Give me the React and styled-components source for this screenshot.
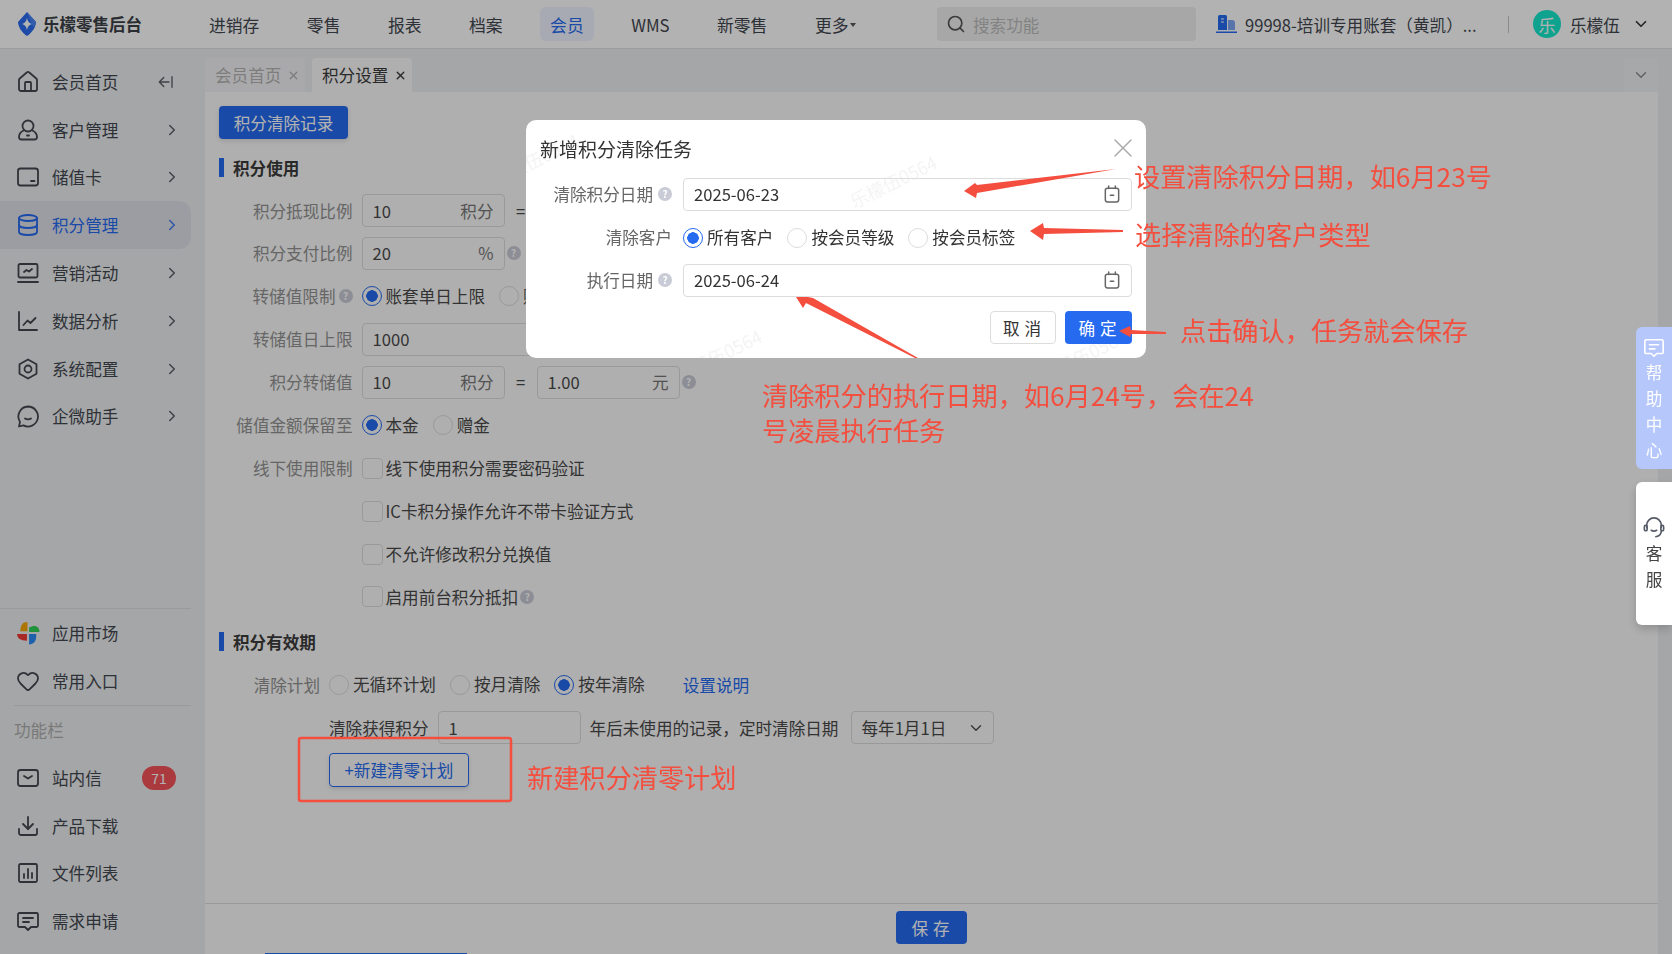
import React from 'react'
import styled, { createGlobalStyle } from 'styled-components'
import { House, Database, ChevronRight, ChevronDown, Heart, Download, X, Search } from 'lucide-react'

const blue = '#266af0'
const red = '#f44e3f'
const ink = '#42474f'

const sideTop = [
  { name: '会员首页', icon: House, collapse: true },
  { name: '客户管理', icon: UserIcon, arrow: true },
  { name: '储值卡', icon: CardIcon, arrow: true },
  { name: '积分管理', icon: Database, arrow: true, active: true },
  { name: '营销活动', icon: ScreenIcon, arrow: true },
  { name: '数据分析', icon: ChartIcon, arrow: true },
  { name: '系统配置', icon: HexIcon, arrow: true },
  { name: '企微助手', icon: ChatIcon, arrow: true },
]

const sideTools = [
  { name: '站内信', icon: MailIcon, badge: 71 },
  { name: '产品下载', icon: Download },
  { name: '文件列表', icon: FilesIcon },
  { name: '需求申请', icon: RequestIcon },
]

const headerNav = ['进销存', '零售', '报表', '档案', '会员', 'WMS', '新零售']

function Line({ size = 24, children }) {
  return (
    <svg width={size} height={size} viewBox="0 0 24 24" fill="none" stroke="currentColor" strokeWidth="1.800" strokeLinecap="round" strokeLinejoin="round">
      {children}
    </svg>
  )
}

function UserIcon({ size }) {
  return (
    <Line size={size}>
      <circle cx="12" cy="8" r="5.500" />
      <path d="M7.500 12.500C4.500 14 3 16.500 3 19c0 1.500 1 2.500 2.500 2.500h13c1.500 0 2.500-1 2.500-2.500 0-2.500-1.500-5-4.500-6.500" />
      <path d="M11 17.500h2" />
    </Line>
  )
}

function CardIcon({ size }) {
  return (
    <Line size={size}>
      <rect x="2" y="3.500" width="20" height="17" rx="2.500" />
      <path d="M15 16h3.500" />
    </Line>
  )
}

function ScreenIcon({ size }) {
  return (
    <Line size={size}>
      <rect x="2.500" y="3" width="19" height="13.500" rx="1.500" />
      <path d="M8 11l2.500-2 2.500 1.500 3-2.500" />
      <path d="M2 21h20" />
    </Line>
  )
}

function ChartIcon({ size }) {
  return (
    <Line size={size}>
      <path d="M3 3v18h18" />
      <path d="M7.500 16l4-4.500 3 2.500 5-5" />
    </Line>
  )
}

function HexIcon({ size }) {
  return (
    <Line size={size}>
      <path d="M12 2.500l8.500 4.800v9.400L12 21.500l-8.500-4.800V7.300z" />
      <circle cx="12" cy="12" r="3.500" />
    </Line>
  )
}

function ChatIcon({ size }) {
  return (
    <Line size={size}>
      <path d="M12 2.500a10 10 0 1 1-4.600 18.900L3 22.500l1-4.600A10 10 0 0 1 12 2.500z" />
      <path d="M9 14.500c1.500 1 4.500 1 6 0" />
    </Line>
  )
}

function MailIcon({ size }) {
  return (
    <Line size={size}>
      <rect x="2" y="4" width="20" height="16" rx="2.500" />
      <path d="M8 10l4 2.500 4-2.500" />
    </Line>
  )
}

function FilesIcon({ size }) {
  return (
    <Line size={size}>
      <rect x="3" y="3" width="18" height="18" rx="1.500" />
      <path d="M8 17v-4M12 17V8M16 17v-5" />
    </Line>
  )
}

function RequestIcon({ size }) {
  return (
    <Line size={size}>
      <path d="M3.500 4h17A1.500 1.500 0 0 1 22 5.500v11a1.500 1.500 0 0 1-1.500 1.500H15l-3 3-3-3H3.500A1.500 1.500 0 0 1 2 16.500v-11A1.500 1.500 0 0 1 3.500 4z" />
      <path d="M7 9h10M7 13h6" />
    </Line>
  )
}

function CollapseIcon() {
  return (
    <Line size={18}>
      <path d="M9 6l-6 6 6 6M3 12h13M20 5v14" />
    </Line>
  )
}

function CalendarIcon() {
  return (
    <Line size={20}>
      <rect x="4" y="5" width="16" height="16.500" rx="2.500" />
      <path d="M8 2.500v3M16 2.500v3M10 13.500h4" />
    </Line>
  )
}

function PinwheelIcon() {
  return (
    <svg width="24" height="24" viewBox="0 0 22 22">
      <path d="M10.500 1C6 1 4 4 4 9.500h6.500z" fill="#f5a800" />
      <path d="M12 1v9h9.500C21.500 5.500 18 2.500 12 6z" fill="#2ed156" />
      <path d="M1 12c0 4 3 6 9 6v-6z" fill="#f03a36" />
      <path d="M12 12v9.500c5 0 7-4 6.500-9.500z" fill="#2a8cf5" />
    </svg>
  )
}

function LogoMark() {
  return (
    <svg width="18" height="24" viewBox="0 0 18 24">
      <path d="M9 0l9 10c-.5 6-4 10.500-9 14-5-3.500-8.500-8-9-14z" fill="#2a6cf0" />
      <path d="M9 0l9 10c-.5 3-1.500 4-3 5l-1-3z" fill="#4b86f7" />
      <path d="M9 6c.6 3.400 2.200 5.300 5 6-2.800.7-4.400 2.600-5 6-.6-3.400-2.200-5.300-5-6 2.800-.7 4.400-2.600 5-6z" fill="#ffffff" />
    </svg>
  )
}

function AccountIcon() {
  return (
    <svg width="21" height="20" viewBox="0 0 21 20">
      <path d="M2 2.500A1.500 1.500 0 0 1 3.500 1h6A1.500 1.500 0 0 1 11 2.500V16H2z" fill={blue} />
      <path d="M5 5h3M5 8h3" stroke="#ffffff" strokeWidth="1.200" />
      <path d="M12 6h4a3 3 0 0 1 3 3v7h-7z" fill="#7ea6f5" />
      <path d="M0 17.500h21V19H0z" fill={blue} />
    </svg>
  )
}

function Radio({ checked, children }) {
  return (
    <Choice>
      <RadioDot $checked={checked} />
      <span>{children}</span>
    </Choice>
  )
}

function UnitField({ value, unit, width }) {
  return (
    <Field $width={width}>
      <span>{value}</span>
      <FieldUnit>{unit}</FieldUnit>
    </Field>
  )
}

function Sidebar() {
  return (
    <Side>
      <SideGroup>
        {sideTop.map(item => (
          <SideItem key={item.name} $active={item.active}>
            <item.icon size={24} strokeWidth={1.8} />
            <span>{item.name}</span>
            {item.arrow && <SideEnd><ChevronRight size={18} strokeWidth={2} /></SideEnd>}
            {item.collapse && <SideEnd $pad={16}><CollapseIcon /></SideEnd>}
          </SideItem>
        ))}
      </SideGroup>
      <SideBottom>
        <SideItem><PinwheelIcon /><span>应用市场</span></SideItem>
        <SideItem><Heart size={24} strokeWidth={1.8} /><span>常用入口</span></SideItem>
        <SideRule />
        <SideCaption>功能栏</SideCaption>
        {sideTools.map(item => (
          <SideItem key={item.name}>
            <item.icon size={24} strokeWidth={1.8} />
            <span>{item.name}</span>
            {item.badge && <Badge>{item.badge}</Badge>}
          </SideItem>
        ))}
      </SideBottom>
    </Side>
  )
}

function TopBar() {
  return (
    <Header>
      <Brand>
        <LogoMark />
        <span>乐檬零售后台</span>
      </Brand>
      <HeaderNav>
        {headerNav.map(name => (
          <HeaderLink key={name} $active={name === '会员'}>{name}</HeaderLink>
        ))}
        <HeaderLink>更多<Caret /></HeaderLink>
      </HeaderNav>
      <SearchBox>
        <Search size={20} strokeWidth={2} color="#555" />
        <span>搜索功能</span>
      </SearchBox>
      <Account>
        <AccountIcon />
        <span>99998-培训专用账套（黄凯）</span>
        <AccountMore>...</AccountMore>
      </Account>
      <HeaderRule />
      <Avatar>乐</Avatar>
      <UserName>乐檬伍</UserName>
      <ChevronDown size={18} strokeWidth={2.200} color="#333" />
    </Header>
  )
}

function SettingsForm() {
  return (
    <Content>
      <Scroll>
        <PrimaryButton>积分清除记录</PrimaryButton>
        <SectionTitle $top={19} $bottom={17}>积分使用</SectionTitle>
        <Rows>
          <Row>
            <Label>积分抵现比例</Label>
            <UnitField value="10" unit="积分" />
            <Equal>=</Equal>
            <UnitField value="1.00" unit="元" />
          </Row>
          <Row>
            <Label>积分支付比例</Label>
            <UnitField value="20" unit="%" />
            <FieldHint>?</FieldHint>
          </Row>
          <Row>
            <Label>转储值限制<HintMark>?</HintMark></Label>
            <ChoiceGroup>
              <Radio checked>账套单日上限</Radio>
              <Radio>账套单笔上限</Radio>
            </ChoiceGroup>
          </Row>
          <Row>
            <Label>转储值日上限</Label>
            <UnitField value="1000" width={317} />
          </Row>
          <Row>
            <Label>积分转储值</Label>
            <UnitField value="10" unit="积分" />
            <Equal>=</Equal>
            <UnitField value="1.00" unit="元" />
            <FieldHint>?</FieldHint>
          </Row>
          <Row>
            <Label>储值金额保留至</Label>
            <ChoiceGroup>
              <Radio checked>本金</Radio>
              <Radio>赠金</Radio>
            </ChoiceGroup>
          </Row>
          <Row>
            <Label>线下使用限制</Label>
            <CheckItem>线下使用积分需要密码验证</CheckItem>
          </Row>
          <Row>
            <Label />
            <CheckItem>IC卡积分操作允许不带卡验证方式</CheckItem>
          </Row>
          <Row>
            <Label />
            <CheckItem>不允许修改积分兑换值</CheckItem>
          </Row>
          <Row>
            <Label />
            <CheckItem>启用前台积分抵扣<CheckHint>?</CheckHint></CheckItem>
          </Row>
        </Rows>
        <SectionTitle $top={19} $bottom={17}>积分有效期</SectionTitle>
        <Rows>
          <Row>
            <Label $width={101}>清除计划</Label>
            <ChoiceGroup>
              <Radio>无循环计划</Radio>
              <Radio>按月清除</Radio>
              <Radio checked>按年清除</Radio>
            </ChoiceGroup>
            <DocLink>设置说明</DocLink>
          </Row>
          <PlanRow>
            <span>清除获得积分</span>
            <UnitField value="1" />
            <span>年后未使用的记录，定时清除日期</span>
            <SelectBox>
              <span>每年1月1日</span>
              <ChevronDown size={18} strokeWidth={1.800} />
            </SelectBox>
          </PlanRow>
          <PlanRow>
            <OutlineButton>+新建清零计划</OutlineButton>
          </PlanRow>
        </Rows>
      </Scroll>
      <Footer>
        <SaveButton>保存</SaveButton>
      </Footer>
    </Content>
  )
}

function ClearTaskDialog() {
  return (
    <Mask>
      <Dialog>
        <Watermark $x={-38} $y={26}>乐檬伍0564</Watermark>
        <Watermark $x={320} $y={48}>乐檬伍0564</Watermark>
        <Watermark $x={145} $y={222}>乐檬伍0564</Watermark>
        <Watermark $x={510} $y={222}>乐檬伍0564</Watermark>
        <DialogHead>
          <span>新增积分清除任务</span>
          <CloseMark><X size={32} strokeWidth={1.100} /></CloseMark>
        </DialogHead>
        <DialogRows>
          <DialogRow>
            <DialogLabel>清除积分日期<HintMark>?</HintMark></DialogLabel>
            <DateField>
              <span>2025-06-23</span>
              <CalendarIcon />
            </DateField>
          </DialogRow>
          <DialogRow>
            <DialogLabel>清除客户</DialogLabel>
            <ChoiceGroup>
              <Radio checked>所有客户</Radio>
              <Radio>按会员等级</Radio>
              <Radio>按会员标签</Radio>
            </ChoiceGroup>
          </DialogRow>
          <DialogRow>
            <DialogLabel>执行日期<HintMark>?</HintMark></DialogLabel>
            <DateField>
              <span>2025-06-24</span>
              <CalendarIcon />
            </DateField>
          </DialogRow>
        </DialogRows>
        <DialogFoot>
          <GhostButton>取消</GhostButton>
          <ConfirmButton>确定</ConfirmButton>
        </DialogFoot>
      </Dialog>
    </Mask>
  )
}

function Annotations() {
  return (
    <>
      <MarkLayer viewBox="0 0 1672 954" width="1672" height="954">
        <polygon points="1116,169 977,185 975,183 964,191 976,198 977,193" fill={red} />
        <polygon points="1123,230 1044,228 1043,223 1030,231 1043,240 1044,234 1123,232" fill={red} />
        <polygon points="1166,332 1131,330 1130,326 1119,331 1130,337 1131,334 1166,334" fill={red} />
        <polygon points="918,358 813,298 808,297 796,297 803,308 806,303 915,358" fill={red} />
        <rect x="299" y="738" width="212" height="63" rx="2" fill="none" stroke={red} strokeWidth="2.500" />
      </MarkLayer>
      <Note $x={1134} $y={177}>设置清除积分日期，如6月23号</Note>
      <Note $x={1135} $y={235}>选择清除的客户类型</Note>
      <Note $x={1180} $y={331}>点击确认，任务就会保存</Note>
      <Note $x={762} $y={396}>清除积分的执行日期，如6月24号，会在24</Note>
      <Note $x={762} $y={431}>号凌晨执行任务</Note>
      <Note $x={527} $y={778}>新建积分清零计划</Note>
    </>
  )
}

function SidePanels() {
  return (
    <Panels>
      <HelpPanel>
        <svg width="22" height="22" viewBox="0 0 24 24" fill="none" stroke="currentColor" strokeWidth="1.800" strokeLinejoin="round" strokeLinecap="round">
          <path d="M3.500 3h17A1.500 1.500 0 0 1 22 4.500v12a1.500 1.500 0 0 1-1.500 1.500H15l-3 3-3-3H3.500A1.500 1.500 0 0 1 2 16.500v-12A1.500 1.500 0 0 1 3.500 3z" />
          <path d="M7 8.500h10M7 13h6" />
        </svg>
        <span>帮</span><span>助</span><span>中</span><span>心</span>
      </HelpPanel>
      <ServicePanel>
        <svg width="22" height="24" viewBox="0 0 24 26" fill="none" stroke="#555a66" strokeWidth="1.800" strokeLinecap="round">
          <path d="M4 12V10a8 8 0 0 1 16 0v2" />
          <rect x="1.500" y="10" width="3" height="6" rx="1.500" />
          <rect x="19.500" y="10" width="3" height="6" rx="1.500" />
          <path d="M9 15.500c1.500 1 4 1 6 0M20 16c0 4-3 6-6 6.500" />
        </svg>
        <span>客</span><span>服</span>
      </ServicePanel>
    </Panels>
  )
}

export default function App() {
  return (
    <>
      <GlobalStyle />
      <Page>
        <TopBar />
        <Body>
          <Sidebar />
          <Main>
            <TabBar>
              <Tab>会员首页<X size={13} strokeWidth={2.500} /></Tab>
              <Tab $active>积分设置<X size={13} strokeWidth={2.500} /></Tab>
              <TabMore><ChevronDown size={18} strokeWidth={1.800} /></TabMore>
            </TabBar>
            <SettingsForm />
          </Main>
        </Body>
        <ScrollTrace />
      </Page>
      <ClearTaskDialog />
      <SidePanels />
      <Annotations />
    </>
  )
}

//styled-components
const GlobalStyle = createGlobalStyle`
  html, body {
    margin: 0;
    height: 100%;
    overflow: hidden;
  }
  body {
    font-family: "Noto Sans CJK SC", "Liberation Sans", sans-serif;
    font-size: 16.6px;
    color: #494949;
  }
  * {
    box-sizing: border-box;
  }
`

const Page = styled.div`
  position: relative;
  width: 1672px;
  height: 954px;
  display: flex;
  flex-direction: column;
  background: #eceef0;
`

const Header = styled.header`
  height: 49px;
  flex: none;
  display: flex;
  align-items: center;
  padding-left: 18px;
  background: #ffffff;
  border-bottom: 1px solid #dfe0e2;
  color: #42474f;
`

const Brand = styled.div`
  display: flex;
  align-items: center;
  gap: 7px;
  width: 124px;
  font-size: 16.500px;
  font-weight: 700;
  white-space: nowrap;
  color: #3b3f46;
`

const HeaderNav = styled.nav`
  display: flex;
  align-items: center;
  gap: 27.500px;
  margin-left: 57px;
  font-size: 16.800px;
`

const HeaderLink = styled.div`
  display: flex;
  align-items: center;
  height: 34px;
  padding: 2px 10px 0;
  border-radius: 6px;
  white-space: nowrap;
  background: ${p => (p.$active ? '#f0f4ff' : 'transparent')};
  color: ${p => (p.$active ? blue : 'inherit')};
`

const Caret = styled.i`
  width: 0;
  height: 0;
  margin-left: 2px;
  border-left: 3.500px solid transparent;
  border-right: 3.500px solid transparent;
  border-top: 4.500px solid #555;
`

const SearchBox = styled.div`
  width: 259px;
  height: 34px;
  margin-left: 70.500px;
  padding-left: 9px;
  display: flex;
  align-items: center;
  gap: 7px;
  border-radius: 4px;
  background: #f0f0f0;
  color: #bcbcbc;
  span {
    padding-top: 2px;
  }
`

const Account = styled.div`
  width: 272px;
  margin-left: 20px;
  display: flex;
  align-items: center;
  gap: 8px;
  white-space: nowrap;
  span {
    padding-top: 2px;
  }
`

const AccountMore = styled.span`
  margin-left: -8px;
`

const HeaderRule = styled.div`
  width: 1px;
  height: 17px;
  margin-left: 20px;
  background: #c8c8c8;
`

const Avatar = styled.div`
  width: 28px;
  height: 28px;
  margin-left: 24px;
  border-radius: 50%;
  display: flex;
  align-items: center;
  justify-content: center;
  background: #16e8cc;
  color: #ffffff;
  font-size: 17px;
`

const UserName = styled.span`
  margin: 0 12px 0 9px;
  padding-top: 2px;
`

const Body = styled.div`
  flex: 1;
  min-height: 0;
  display: flex;
`

const Side = styled.aside`
  width: 205px;
  flex: none;
  display: flex;
  flex-direction: column;
  justify-content: space-between;
  padding: 9px 14px 9px 0;
  color: ${ink};
`

const SideGroup = styled.div`
  display: flex;
  flex-direction: column;
`

const SideBottom = styled(SideGroup)`
  border-top: 1px solid #dcdde0;
`

const SideItem = styled.div`
  height: 47.800px;
  padding-left: 16px;
  display: flex;
  align-items: center;
  gap: 12px;
  border-radius: 0 12px 12px 0;
  background: ${p => (p.$active ? '#dfe1e9' : 'transparent')};
  color: ${p => (p.$active ? blue : 'inherit')};
`

const SideEnd = styled.span`
  display: flex;
  margin-left: auto;
  padding-right: ${p => p.$pad || 10}px;
  opacity: 0.85;
`

const SideRule = styled.div`
  height: 1px;
  margin-left: 14px;
  background: #dcdde0;
`

const SideCaption = styled.div`
  height: 48px;
  padding-left: 14px;
  display: flex;
  align-items: center;
  color: #aeaeae;
`

const Badge = styled.span`
  width: 34px;
  height: 24px;
  margin-left: auto;
  margin-right: 15px;
  border-radius: 12px;
  display: flex;
  align-items: center;
  justify-content: center;
  background: #f5535a;
  color: #ffffff;
  font-size: 14px;
`

const Main = styled.main`
  flex: 1;
  min-width: 0;
  display: flex;
  flex-direction: column;
  padding-right: 14px;
`

const TabBar = styled.div`
  height: 43px;
  flex: none;
  display: flex;
  align-items: flex-end;
  gap: 7px;
`

const Tab = styled.div`
  width: 100px;
  height: 34px;
  padding-left: 10px;
  display: flex;
  align-items: center;
  gap: 6px;
  border-radius: 4px 4px 0 0;
  background: ${p => (p.$active ? '#fbfbfb' : '#f3f3f5')};
  color: ${p => (p.$active ? '#3c3c3c' : '#b4b4b4')};
`

const TabMore = styled.div`
  width: 34px;
  height: 34px;
  margin-left: auto;
  display: flex;
  align-items: center;
  justify-content: center;
  border-radius: 4px 4px 0 0;
  background: #f0f1f3;
  color: #8a8a8a;
`

const Content = styled.section`
  flex: 1;
  min-height: 0;
  display: flex;
  flex-direction: column;
  background: #fbfbfb;
`

const Scroll = styled.div`
  flex: 1;
  min-height: 0;
  padding: 14px;
`

const PrimaryButton = styled.button`
  display: block;
  width: 129px;
  height: 33px;
  padding: 0;
  border: 0;
  border-radius: 4px;
  background: ${blue};
  color: #ffffff;
  font: inherit;
  box-shadow: 0 2px 5px rgba(0, 0, 0, 0.12);
`

const SectionTitle = styled.h3`
  height: 19px;
  margin: ${p => p.$top}px 0 ${p => p.$bottom}px;
  padding-left: 9px;
  display: flex;
  align-items: center;
  border-left: 5px solid ${blue};
  font-size: 16.600px;
  font-weight: 700;
  color: #3c3c3c;
`

const Rows = styled.div`
  display: flex;
  flex-direction: column;
  gap: 9.950px;
`

const Row = styled.div`
  height: 33px;
  display: flex;
  align-items: center;
  gap: 9px;
`

const Label = styled.div`
  width: ${p => p.$width || 133.500}px;
  flex: none;
  display: flex;
  align-items: center;
  justify-content: flex-end;
  gap: 2px;
  color: #929292;
  white-space: nowrap;
`

const Field = styled.div`
  width: ${p => p.$width || 143}px;
  height: 33px;
  padding: 0 10px;
  display: flex;
  align-items: center;
  justify-content: space-between;
  flex: none;
  border: 1px solid #dcdcdc;
  border-radius: 4px;
  color: #494949;
`

const FieldUnit = styled.span`
  color: #777;
`

const Equal = styled.span`
  width: 22px;
  text-align: center;
  margin: 0 -4px;
`

const HintMark = styled.span`
  width: 14px;
  height: 14px;
  flex: none;
  border-radius: 50%;
  display: inline-flex;
  align-items: center;
  justify-content: center;
  margin-left: 1px;
  background: #c9cbd6;
  color: #ffffff;
  font-size: 10px;
  font-weight: 700;
  line-height: 1;
`

const FieldHint = styled(HintMark)`
  margin-left: -7px;
`

const CheckHint = styled(HintMark)`
  margin-left: -1px;
`

const ChoiceGroup = styled.div`
  display: flex;
  align-items: center;
  gap: 14px;
`

const Choice = styled.label`
  display: flex;
  align-items: center;
  gap: 4px;
  white-space: nowrap;
  span {
    padding-bottom: 1px;
  }
`

const RadioDot = styled.i`
  width: 20px;
  height: 20px;
  flex: none;
  border-radius: 50%;
  border: 1px solid ${p => (p.$checked ? blue : '#dcdcdc')};
  background: ${p => (p.$checked ? `radial-gradient(circle, ${blue} 0 5.500px, transparent 6px)` : 'transparent')};
`

const CheckItem = styled.div`
  display: flex;
  align-items: center;
  gap: 3px;
  white-space: nowrap;
  &::before {
    content: '';
    width: 19px;
    height: 19px;
    border: 1px solid #dcdcdc;
    border-radius: 4px;
    flex: none;
  }
`

const DocLink = styled.span`
  margin-left: 29px;
  color: ${blue};
`

const PlanRow = styled.div`
  height: 33px;
  padding-left: 110px;
  display: flex;
  align-items: center;
  gap: 9px;
  white-space: nowrap;
`

const SelectBox = styled.div`
  width: 143px;
  height: 33px;
  margin-left: 4px;
  padding: 0 8px 0 9px;
  display: flex;
  align-items: center;
  justify-content: space-between;
  border: 1px solid #dcdcdc;
  border-radius: 4px;
`

const OutlineButton = styled.button`
  width: 140px;
  height: 34px;
  margin-top: -1px;
  padding: 0;
  border: 1px solid ${blue};
  border-radius: 4px;
  background: transparent;
  color: ${blue};
  font: inherit;
  box-shadow: 0 2px 4px rgba(0, 0, 0, 0.12);
`

const Footer = styled.footer`
  height: 51px;
  flex: none;
  display: flex;
  justify-content: center;
  padding-top: 7px;
  border-top: 1px solid #dcdcdc;
`

const SaveButton = styled.button`
  width: 71px;
  height: 33px;
  padding: 0 0 0 3px;
  border: 0;
  border-radius: 4px;
  background: ${blue};
  color: #ffffff;
  font: inherit;
  letter-spacing: 5px;
`

const ScrollTrace = styled.div`
  position: absolute;
  left: 265px;
  bottom: 0;
  width: 202px;
  height: 1px;
  background: ${blue};
`

const Mask = styled.div`
  position: fixed;
  inset: 0;
  z-index: 10;
  display: flex;
  justify-content: center;
  align-items: flex-start;
  padding-top: 120px;
  background: rgba(0, 0, 0, 0.3);
`

const Dialog = styled.div`
  position: relative;
  width: 620px;
  height: 238px;
  padding: 0 14px;
  overflow: hidden;
  border-radius: 10px;
  background: #ffffff;
  color: #333;
`

const Watermark = styled.span`
  position: absolute;
  left: ${p => p.$x}px;
  top: ${p => p.$y}px;
  transform: rotate(-26deg);
  font-size: 18px;
  color: #f4f4f4;
  white-space: nowrap;
  pointer-events: none;
`

const DialogHead = styled.div`
  position: relative;
  height: 58px;
  display: flex;
  align-items: center;
  justify-content: space-between;
  padding-bottom: 2px;
  font-size: 19px;
  color: #333;
`

const CloseMark = styled.span`
  display: flex;
  margin-right: -7px;
  color: #aaaaaa;
`

const DialogRows = styled.div`
  position: relative;
  display: flex;
  flex-direction: column;
  gap: 10px;
`

const DialogRow = styled.div`
  height: 33px;
  display: flex;
  align-items: center;
  gap: 11px;
`

const DialogLabel = styled.div`
  width: 132px;
  flex: none;
  display: flex;
  align-items: center;
  justify-content: flex-end;
  gap: 4px;
  padding-bottom: 1px;
  color: #666;
  white-space: nowrap;
`

const DateField = styled.div`
  flex: 1;
  height: 33px;
  padding: 0 9px 1px 10px;
  display: flex;
  align-items: center;
  justify-content: space-between;
  border: 1px solid #dcdcdc;
  border-radius: 4px;
  color: #333;
  svg {
    color: #666;
  }
`

const DialogFoot = styled.div`
  position: relative;
  display: flex;
  justify-content: flex-end;
  gap: 9px;
  margin-top: 14px;
`

const GhostButton = styled.button`
  width: 66px;
  height: 33px;
  padding: 0 0 0 3px;
  border: 1px solid #dcdcdc;
  border-radius: 4px;
  background: #ffffff;
  color: #333;
  font: inherit;
  letter-spacing: 5px;
`

const ConfirmButton = styled(GhostButton)`
  width: 67px;
  border: 0;
  background: ${blue};
  color: #ffffff;
`

const MarkLayer = styled.svg`
  position: fixed;
  inset: 0;
  z-index: 30;
  pointer-events: none;
`

const Note = styled.div`
  position: fixed;
  left: ${p => p.$x}px;
  top: ${p => p.$y}px;
  z-index: 30;
  transform: translateY(-50%);
  font-size: 26.200px;
  line-height: 1.2;
  color: ${red};
  white-space: nowrap;
`

const Panels = styled.div`
  position: fixed;
  right: 0;
  top: 327px;
  z-index: 20;
  width: 36px;
  display: flex;
  flex-direction: column;
  gap: 13px;
`

const HelpPanel = styled.div`
  height: 142px;
  padding-top: 10px;
  display: flex;
  flex-direction: column;
  align-items: center;
  border-radius: 6px 0 0 6px;
  background: #b5c7fb;
  color: #ffffff;
  font-size: 16.600px;
  line-height: 26px;
`

const ServicePanel = styled(HelpPanel)`
  height: 143px;
  padding-top: 34px;
  background: #ffffff;
  color: #444;
  box-shadow: 0 4px 10px rgba(0, 0, 0, 0.18);
`
